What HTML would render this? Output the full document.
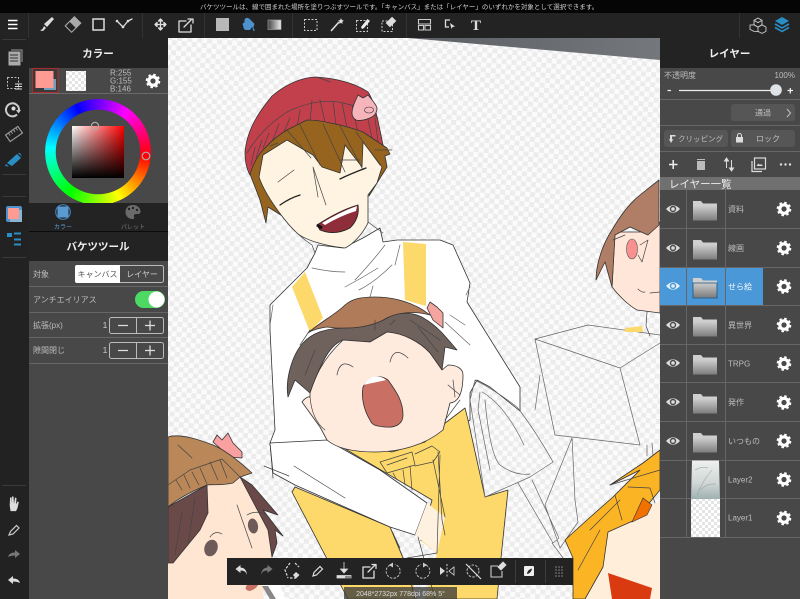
<!DOCTYPE html>
<html lang="ja"><head><meta charset="utf-8"><title>MediBang</title>
<style>
html,body{margin:0;padding:0;background:#222;width:800px;height:599px;overflow:hidden}
svg{display:block;filter:blur(.3px)}
text{font-family:"Liberation Sans","Noto Sans CJK JP",sans-serif}
.ln{fill:none;stroke:#444;stroke-width:.7;stroke-linejoin:round;stroke-linecap:round}
.gl{fill:none;stroke:#666;stroke-width:.7;stroke-linejoin:round;stroke-linecap:round}
.o{stroke:#333;stroke-width:.8;stroke-linejoin:round}
.i{fill:none;stroke:#ddd;stroke-width:1.3;stroke-linecap:round;stroke-linejoin:round}
.sep{stroke:#333;stroke-width:1}
.lab{font-size:8px;fill:#bdbdbd}
.div{stroke:#666;stroke-width:1}
</style></head><body>
<svg width="800" height="599" viewBox="0 0 800 599" xmlns="http://www.w3.org/2000/svg">
<defs>
<pattern id="ck" width="10" height="10" patternUnits="userSpaceOnUse" patternTransform="rotate(5)">
<rect width="10" height="10" fill="#fbfbfb"/><rect width="5" height="5" fill="#ececec"/><rect x="5" y="5" width="5" height="5" fill="#ececec"/></pattern>
<pattern id="ck2" width="6" height="6" patternUnits="userSpaceOnUse">
<rect width="6" height="6" fill="#fff"/><rect width="3" height="3" fill="#e4e4e4"/><rect x="3" y="3" width="3" height="3" fill="#e4e4e4"/></pattern>
<linearGradient id="gr" x1="0" x2="1" y1="0" y2="0"><stop offset="0" stop-color="#444"/><stop offset="1" stop-color="#eee"/></linearGradient>
<linearGradient id="fo" x1="0" x2="0" y1="0" y2="1"><stop offset="0" stop-color="#cfcfcf"/><stop offset="1" stop-color="#7d7d7d"/></linearGradient>
<linearGradient id="wed" x1="0" x2="1" y1="0" y2="0"><stop offset="0" stop-color="#5c5f64"/><stop offset="1" stop-color="#74777c"/></linearGradient>
<linearGradient id="sqw" x1="0" x2="1" y1="0" y2="0"><stop offset="0" stop-color="#fff"/><stop offset="1" stop-color="#f00"/></linearGradient>
<linearGradient id="sqb" x1="0" x2="0" y1="0" y2="1"><stop offset="0" stop-color="#000" stop-opacity="0"/><stop offset="1" stop-color="#000"/></linearGradient>
<linearGradient id="l2" x1="0" x2="0" y1="0" y2="1"><stop offset="0" stop-color="#eef0ef"/><stop offset=".6" stop-color="#cfd6d4"/><stop offset="1" stop-color="#9fb0b0"/></linearGradient>
<g id="gear"><circle r="4.2" fill="none" stroke="#fff" stroke-width="3.2"/><circle r="6.2" fill="none" stroke="#fff" stroke-width="2.2" stroke-dasharray="2.45 2.42"/></g>
<g id="eye"><path d="M-7 0Q0-7.5 7 0Q0 7.5-7 0Z" fill="#ddd"/><circle r="3.2" fill="#484848"/><circle r="1.8" fill="#ddd"/></g>
<g id="folder"><path d="M-12-8h8l2 2.5h14V11h-24Z" fill="#cfcfcf"/><path d="M-12-3.5H12V11.5H-12Z" fill="url(#fo)"/></g>
</defs>

<!-- canvas -->
<rect x="168" y="38" width="492" height="561" fill="url(#ck)"/>
<path d="M408 38L660 60V38Z" fill="url(#wed)"/>

<!-- main shirt -->
<path class="o" fill="#fff" d="M315 253L318 245 343 248 363 238 380 228 383 242 397 240 440 240 453 245 470 283 467 302 520 387 520 411 490 387 477 380 470 393 470 420 440 440 330 440 273 473 270 443 275 430 270 330 270 305 307 268Z" stroke-width=".6"/>
<path d="M292 287L305 272 323 318 310 332Z" fill="#fcd96a"/>
<path d="M403 242L426 244 426 306 405 300Z" fill="#fcd96a"/>
<path class="gl" d="M312 268Q330 272 345 272M345 287Q362 278 378 268M355 280Q372 262 385 245M359 290Q375 282 392 265M395 265L400 245M370 297L373 286M273 305L270 325M466 295L470 287M450 315L465 325M445 322L470 345"/>

<!-- big hat boy -->
<path class="o" fill="#c1404c" d="M245 152C247 130 258 113 272 96C285 85 300 78 315 77C335 78 355 83 368 92C374 100 378 120 383 145L387 150L363 135C345 127 325 122 307 121C290 128 270 142 258 158L250 175C246 168 245 160 245 152Z"/>
<path class="ln" d="M247 153Q262 128 287 112Q320 96 347 104Q365 108 378 118M251 165L255 147M256 158L262 140M263 148L269 133M272 142L279 124M284 132L290 118M297 127L300 110M310 122L312 100M325 122L320 100M336 125L333 101M347 128L342 103M358 133L352 105M372 138L367 115M378 142L375 118M317 77L330 82"/>
<path class="o" fill="#f6b4bb" d="M352 113C352 106 356 100 358 95L363 98 368 95C372 100 376 104 377 108C377 113 374 116 372 117C366 120 360 121 356 120C353 118 352 116 352 113Z"/>
<ellipse cx="369" cy="110" rx="4.5" ry="3" fill="#f6b4bb" stroke="#333" stroke-width=".6"/>
<path class="o" fill="#96641e" d="M250 174C254 162 258 155 263 150C272 140 280 134 287 130L307 120C315 120 322 121 330 123C342 125 352 128 363 132L387 148 390 154 385 156 387 167 377 183 369 196 372 165 340 180 290 215 292 222 268 207 266 223 260 200Z"/>
<path class="o" fill="#fff4e2" d="M259 177L263 155 287 140 313 155 322 167 340 173 345 145 362 167 363 142 382 167 377 183 368 195L368 223C362 235 352 245 345 248C325 246 305 240 297 233C285 222 265 195 259 177Z"/>
<path class="ln" d="M287 130L311 158M300 125L320 165M323 124L345 172M340 126L363 170M356 132L380 165M375 150L392 150M270 146L278 143M313 167L318 197M313 167L326 205M278 182L294 170M340 160L360 160"/>
<path d="M280 205Q290 198 300 195M340 179Q350 174 366 168" fill="none" stroke="#222" stroke-width="1.3" stroke-linecap="round"/>
<path d="M317 225Q340 210 358 205Q360 218 350 228Q335 236 320 230Z" fill="#8d2e3a" stroke="#222" stroke-width=".8"/>
<path d="M322 223Q340 212 357 206L356 211Q340 216 325 225Z" fill="#fff"/>
<path d="M317 225L322 228" stroke="#111" stroke-width="3"/>
<path class="ln" d="M297 233L305 240 312 245 315 253M368 222L383 233"/>

<!-- kid body -->
<path class="o" fill="#fcd96a" d="M440 427L465 408 468 420 485 497 508 490 501 558 497 599 405 599 432 500 330 440 392 452 425 442Z"/>
<path fill="#fcd96a" class="o" d="M292 492L295 487 390 527 408 570 415 599 348 599Z"/>
<path class="o" fill="#fff" stroke-width=".6" d="M270 443L327 440 380 470 427 503 415 535 390 527 295 485 273 473Z"/>
<path fill="#fff1e0" d="M427 503L445 517 437 553 415 535Z"/>
<path d="M393 533L413 535 437 553 425 599 417 599 407 558Z" fill="url(#ck)"/>
<path class="ln" d="M380 462L412 452 415 465 387 473ZM415 454L432 446 440 452 433 462 415 466M387 465L407 458M393 473L397 480M403 470L405 485M410 466L412 490M438 452L442 520 445 535M440 455L437 553M433 460L445 517M393 533L408 570M264 466L289 476M294 466L345 498M270 443L273 478M390 527L400 548M407 558L437 553M435 599L418 537"/>

<!-- kid head -->
<path class="o" fill="#b07b58" d="M308 333C320 322 335 315 345 305C352 299 360 297 375 297C395 297 415 303 430 315C415 311 400 312 387 318L373 327C360 327 345 330 327 327C320 328 312 330 308 333Z"/>
<path class="o" fill="#f5a5a0" d="M427 308L430 302 437 307 443 313 443 328 433 320Z"/>
<path class="o" fill="#6f625c" d="M288 397C285 380 292 355 303 343C312 333 325 328 347 328C360 328 375 325 387 318C400 311 415 312 425 319C440 328 448 340 457 350L445 347 442 370 430 353C420 342 403 333 387 332L370 342 343 340C330 345 322 360 310 393L295 380Z"/>
<path class="o" fill="#ffeade" d="M310 393C316 375 322 360 343 340L370 342 387 332C403 333 420 342 430 353L442 370 448 365C456 365 463 368 463 375C463 390 460 402 450 403L443 430C425 445 400 452 375 452C350 452 335 447 327 440L320 427 302 402C304 399 308 396 310 397Z"/>
<path class="ln" d="M337 375Q340 358 353 367M390 362Q394 345 408 358M310 397Q312 420 325 430M448 385L460 395M453 380L455 397M460 400L445 420"/>
<path d="M363 387C368 378 378 373 388 380C395 390 403 400 403 415C403 424 396 428 385 427C375 426 372 425 370 420C364 410 361 398 363 387Z" fill="#c96f63" stroke="#333" stroke-width=".8"/>
<path d="M364 385C368 377 378 373 386 380C378 382 370 383 364 385Z" fill="#fff"/>
<path class="ln" d="M300 345L310 330M315 350L305 375M410 320L440 340M418 327L438 352M390 325L395 320M375 320L375 330"/>

<!-- shovel / box / legs -->
<path class="gl" d="M475 380L470 400 485 497 530 477 553 462Q535 430 517 407Q495 390 475 380ZM480 392L478 410 490 470M482 392Q505 405 524 445M485 400Q490 455 500 465Q515 476 530 474M518 483L553 543 559 538 532 480M535 410L540 375M535 339L588 325 660 335M535 339L620 368 660 343M620 368L640 445M535 339L555 435 640 445M572 438L575 500 578 522M572 438L545 505 560 548M560 548L578 522M552 543L572 570M647 445L647 456M652 443L653 456"/>

<!-- right girl -->
<path class="o" fill="#ffe6d8" d="M615 232L612 287C618 295 628 305 637 310L660 313 660 222 648 232Z"/>
<path class="o" fill="#b07e66" d="M596 280C596 262 604 242 612 230C620 216 630 203 640 195L659 180 659 225 648 235 630 227 615 235 612 287 605 262Z"/>
<ellipse cx="632" cy="249" rx="5.500" ry="10" fill="#f7908f" stroke="#555" stroke-width=".6"/>
<path class="ln" d="M613 240L625 235M640 245L648 240 642 262 638 255M638 289Q642 293 645 292M650 293L660 292M647 312L646 326 650 336"/>
<path d="M625 328L642 326 643 332 625 332Z" fill="#fcd96a"/>

<!-- blond -->
<path fill="#ffeeda" d="M608 532L635 520 660 500 660 599 585 599 603 567Z"/>
<path class="o" fill="#fbb424" d="M610 485L643 463 660 450 660 490 635 520 608 532 603 567 585 599 573 599 573 558 565 540 587 520 613 497 640 470Z"/>
<path d="M632 522L643 498 652 505 647 515Z" fill="#f07000" stroke="#333" stroke-width=".6"/>
<path d="M608 573L652 588 650 599 612 599Z" fill="#d93a10"/>
<path class="ln" d="M628 487L650 488 655 503M615 495L622 520M590 530L620 500M578 570L600 530M610 485L660 470"/>

<!-- left-bottom kid -->
<path fill="#ffe6d2" d="M207 485L233 483 240 477 263 510 275 530 272 557 262 599 168 599 168 563 173 563 200 530 208 513Z"/>
<path class="o" fill="#6a4a48" d="M168 507L207 485 208 513 200 530 173 563 168 563Z"/>
<path class="o" fill="#6a4a48" d="M240 477L252 485 278 515 263 510 283 536 275 530 277 543 272 557 268 530Z"/>
<path class="o" fill="#f9a0a0" d="M213 442L217 435 222 440 228 433 233 443 242 452 242 458 230 457Z"/>
<path class="o" fill="#b98758" d="M168 437C180 433 200 440 213 445C225 450 240 462 252 473L240 477 233 483C220 486 212 484 207 485C195 490 180 497 168 507Z"/>
<path class="ln" d="M168 485L190 470 222 459 240 477M176 480L182 490M184 475L190 488M192 472L199 485M200 468L207 484M210 462L218 480M220 460L227 478M178 445L192 458M182 512L175 555M195 498L188 545M237 505L252 548"/>
<path d="M247 515Q255 510 265 514M210 537Q215 530 222 534" class="ln"/>
<ellipse cx="253" cy="526" rx="5" ry="7.500" fill="#6e5a58" transform="rotate(-10 253 526)"/><ellipse cx="211" cy="548" rx="6.500" ry="8.500" fill="#6e5a58" transform="rotate(20 211 548)"/>
<path d="M247 585Q243 590 250 591 256 589 258 585Z" fill="#c96f63"/>
<path d="M262 585L280 585 285 599 275 599Z" fill="#fff"/>
<path d="M262 586L268 586 276 599 270 599Z" fill="#888"/>

<!-- TOP BAR -->
<rect x="0" y="0" width="800" height="13" fill="#050505"/>
<text x="399" y="9" text-anchor="middle" font-size="6.5" fill="#cfcfcf">バケツツールは、線で囲まれた場所を塗りつぶすツールです。「キャンバス」または「レイヤー」のいずれかを対象として選択できます。</text>
<rect x="0" y="13" width="800" height="25" fill="#232323"/>
<path class="sep" d="M28.5 13V38M142.5 13V38M204.5 13V38M292.5 13V38M406.5 13V38M739.5 13V38"/>
<path d="M8 20.5H17.5M8 24.5H17.5M8 28.5H17.5" stroke="#fff" stroke-width="1.5"/>
<path d="M54 19L52 17 44 24 47 27ZM44 26L46 28 43 31 40 30.5 42.5 29Z" fill="#ddd"/>
<g transform="translate(73 24.5) rotate(45)"><rect x="-4.5" y="-6.5" width="9" height="13" fill="none" stroke="#aaa" stroke-width="1.1"/><rect x="-4.5" y="-6.5" width="9" height="7" fill="#aaa"/></g>
<rect x="93" y="19" width="11" height="11" fill="none" stroke="#ddd" stroke-width="1.5"/>
<path d="M117 21L123 27 128 21 132 19" class="i"/><circle cx="117" cy="21" r="1.3" fill="#ddd"/><circle cx="123" cy="27" r="1.3" fill="#ddd"/><circle cx="128" cy="21" r="1.3" fill="#ddd"/>
<path d="M155 24.5H166M160.5 19V30M155 24.5l2-2v4ZM166 24.5l-2-2v4ZM160.5 19l-2 2h4ZM160.5 30l-2-2h4Z" class="i" stroke-width="1" fill="#ddd"/>
<path d="M186 21H179V32H191V25M184 27L191 20M188 19H193V23" class="i" stroke-width="1.2"/>
<rect x="216" y="18" width="13" height="13" fill="#b8b8b8"/>
<path d="M243 24L249 19 254 24 253 27H244ZM245 23V19.5Q247 17 249 19.5" fill="#4d92cc" stroke="#4d92cc" stroke-width=".9"/><path d="M253 27Q255 30 254.5 31 252 31 253 27ZM243 27H252L250 30H245Z" fill="#4d92cc"/>
<rect x="268" y="20" width="13" height="9.5" fill="url(#gr)" stroke="#aaa" stroke-width=".6"/>
<rect x="304.5" y="19.5" width="12.5" height="11" fill="none" stroke="#ccc" stroke-width="1" stroke-dasharray="2 1.5"/>
<path d="M331 31L339 22" stroke="#ddd" stroke-width="1.6"/><path d="M341 18l.8 2 2 .5-1.5 1.4.3 2-1.6-1-1.8 1 .4-2-1.5-1.4 2-.5Z" fill="#ddd"/>
<rect x="356.5" y="20.5" width="11" height="11" fill="none" stroke="#ccc" stroke-width="1" stroke-dasharray="2 1.5"/>
<path d="M361 27l1 2 2-1 6-7-2.500-2Z" fill="#eee"/>
<rect x="382" y="21" width="10.500" height="10.500" fill="none" stroke="#ccc" stroke-width="1" stroke-dasharray="2 1.5"/>
<g transform="translate(391 22) rotate(45)"><rect x="-3" y="-4.500" width="6" height="9" fill="#ddd"/></g>
<path d="M418.500 19.500H430.500V24H418.500ZM418.500 25.500H423.500V30H418.500ZM425 25.500H430.500V30H425Z" fill="none" stroke="#ccc" stroke-width="1.100"/>
<path d="M450 20H445.500V27H449" fill="none" stroke="#ddd" stroke-width="1.300"/><path d="M450 23l5 3.500-2.500.5-1 2Z" fill="#ddd"/>
<text x="476" y="30" text-anchor="middle" font-size="15" font-weight="700" fill="#ddd" style="font-family:'Liberation Serif',serif">T</text>
<g fill="none" stroke="#ccc" stroke-width=".9"><path d="M758 18l4 2.300v4.500l-4 2.300-4-2.300v-4.500Z"/><path d="M754 24.800l4 2.300v4.500l-4-.2-4-2v-4.300ZM762 24.800l4 2.300v4.300l-4 2-4-2v-4.300ZM754 20.300l4 2.300 4-2.300"/></g>
<path d="M782 17l7 4-7 4-7-4Z" fill="#2a8ec6"/><path d="M775 24l7 4 7-4M775 27.500l7 4 7-4" fill="none" stroke="#2a8ec6" stroke-width="1.600"/>

<!-- LEFT STRIP -->
<rect x="0" y="38" width="29" height="561" fill="#222"/>
<path d="M2 39.500H26M2 174.500H26M2 196.500H26M2 257.500H26M2 485.500H26" stroke="#3a3a3a"/>
<path d="M9 52H20V65H9Z" fill="#aaa" stroke="#aaa"/><path d="M11 50H22V62" fill="none" stroke="#999"/><path d="M10 55H18M10 58H18M10 61H18" stroke="#333"/>
<rect x="7.500" y="77.500" width="11" height="11" fill="none" stroke="#bbb" stroke-dasharray="2 1.500"/><path d="M15 84H22M15 86.500H22M15 89H22" stroke="#ddd"/>
<path d="M19 110A6.500 6.500 0 1 0 17 114.500" fill="none" stroke="#ccc" stroke-width="2"/><circle cx="13.500" cy="108.500" r="2" fill="#ddd"/><path d="M21 110h-5l2.500 3.500Z" fill="#ccc"/>
<g transform="translate(14 134) rotate(-35)"><rect x="-7.500" y="-4" width="15" height="8" fill="none" stroke="#999" stroke-width="1.200"/><path d="M-4-4v3M-1-4v3M2-4v3M5-4v3" stroke="#999"/></g>
<path d="M7 163L17 154 21 158 12 166ZM18 153L20 155 22 157 20 153Z" fill="#2a8ec6"/><path d="M6 164l-1 2 4 .5Z" fill="#2a8ec6"/>
<rect x="6" y="206" width="16" height="16" rx="2" fill="#4d92cc"/><rect x="10" y="210" width="12" height="12" fill="#8fb4d0"/><rect x="8" y="208" width="11" height="11" fill="#ff9b92"/>
<path d="M7 233h5v4H7Z" fill="#2a8ec6"/><path d="M14 233.500H21M14 239.500H21M14 244.500H21" stroke="#2a8ec6" stroke-width="2"/>
<path d="M9 500l1 5V497.500h1.500V504l.5-7.500h1.500L14 504l1-6.500 1.500.5-.5 6.500 1.500-3 1.300.6-1.300 6-1.500 3h-5.500Z" fill="#ddd"/>
<path d="M9 535l1.500-3.500 6-6 2.500 2.500-6 6Z" fill="none" stroke="#ccc" stroke-width="1.200"/>
<path d="M8 557q1-4.500 7-4.500v-2.500l5 4-5 4v-2.500q-4 0-7 1.500Z" fill="#777"/>
<path d="M20 583q-1-4.500-7-4.500v-2.500l-5 4 5 4v-2.500q4 0 7 1.500Z" fill="#ddd"/>

<!-- LEFT PANEL -->
<rect x="29" y="38" width="139" height="561" fill="#484848"/>
<rect x="29" y="38" width="139" height="30" fill="#232323"/>
<text x="98" y="57" text-anchor="middle" font-size="10.500" fill="#eee" font-weight="700">カラー</text>
<rect x="32.500" y="68.500" width="25.500" height="24" fill="#3a3a3a" stroke="#a82c30" stroke-width="1.100"/>
<rect x="44" y="79" width="12" height="11" fill="#6fa0bb"/><rect x="35.500" y="71" width="18" height="17" fill="#ff9b92"/>
<rect x="66" y="71" width="20" height="20" fill="url(#ck2)"/>
<text x="110" y="75.500" class="lab">R:255</text><text x="110" y="83.500" class="lab">G:155</text><text x="110" y="91.500" class="lab">B:146</text>
<use href="#gear" x="153" y="81"/>
<path d="M29 93.500H168" stroke="#6a6a6a"/>
<foreignObject x="45" y="99" width="106" height="106"><div xmlns="http://www.w3.org/1999/xhtml" style="width:106px;height:106px;border-radius:50%;background:conic-gradient(from 95deg,#f00,#ff0 60deg,#0f0 120deg,#0ff 180deg,#00f 240deg,#f0f 300deg,#f00);-webkit-mask:radial-gradient(circle,transparent 42px,#000 42.500px);mask:radial-gradient(circle,transparent 42px,#000 42.500px)"></div></foreignObject>
<rect x="72" y="126" width="52" height="52" fill="url(#sqw)"/><rect x="72" y="126" width="52" height="52" fill="url(#sqb)"/>
<circle cx="95" cy="126" r="3.600" fill="none" stroke="#aaa" stroke-width="1.200"/>
<circle cx="146" cy="156" r="3.800" fill="none" stroke="#aaa" stroke-width="1.200"/>
<rect x="29" y="203" width="139" height="28" fill="#232323"/>
<circle cx="63" cy="212" r="7.300" fill="none" stroke="#3f7fb4" stroke-width="1.200"/><rect x="57.500" y="206.500" width="11" height="11" rx="1.500" fill="#5b9ad0"/>
<text x="63" y="229" text-anchor="middle" font-size="6" fill="#5b9ad0">カラー</text>
<path d="M133 205c-5 0-7.500 3-7.500 7 0 3.500 2.500 7 7 7 2 0 2-1.500 1.500-2.500-.5-1.500.5-2.500 2-2.500h2c1.500 0 2.500-1 2.500-2.500 0-3.500-3-6.500-7.500-6.500Z" fill="#6a6a6a"/><circle cx="129" cy="209" r="1.200" fill="#232323"/><circle cx="133" cy="208" r="1.200" fill="#232323"/><circle cx="137" cy="210" r="1.200" fill="#232323"/>
<text x="133" y="229" text-anchor="middle" font-size="6" fill="#777">パレット</text>
<rect x="29" y="231" width="139" height="30" fill="#232323"/><path d="M29 231.500H168" stroke="#0c0c0c"/>
<text x="98" y="250" text-anchor="middle" font-size="10.500" fill="#eee" font-weight="700">バケツツール</text>
<path class="div" d="M29 286.500H168M29 312.500H168M29 337.500H168M29 363.500H168"/>
<text x="33" y="277" class="lab">対象</text>
<rect x="75.500" y="265.500" width="88" height="17" rx="2" fill="none" stroke="#bbb"/>
<path d="M77 265h43v18H77a2 2 0 0 1-2-2V267a2 2 0 0 1 2-2Z" fill="#fff"/>
<text x="97.500" y="277" text-anchor="middle" font-size="8" fill="#555">キャンバス</text>
<text x="142" y="277" text-anchor="middle" font-size="8" fill="#ccc">レイヤー</text>
<text x="33" y="302.500" class="lab">アンチエイリアス</text>
<rect x="135" y="291" width="30" height="17" rx="8.500" fill="#4cd964"/><circle cx="156.500" cy="299.500" r="8" fill="#fff"/>
<text x="33" y="328" class="lab">拡張(px)</text><text x="105" y="328" text-anchor="middle" font-size="8.500" fill="#ccc">1</text>
<g id="stp"><rect x="109.500" y="317.500" width="54" height="16" rx="2" fill="none" stroke="#bbb"/><path d="M136.500 317.500V333.500" stroke="#bbb"/><path d="M118 325.500H128M145 325.500H155M150 320.500V330.500" stroke="#ddd" stroke-width="1.300"/></g>
<text x="33" y="353" class="lab">隙間閉じ</text><text x="105" y="353" text-anchor="middle" font-size="8.500" fill="#ccc">1</text>
<use href="#stp" y="25"/>

<!-- RIGHT PANEL -->
<rect x="660" y="38" width="140" height="561" fill="#484848"/>
<rect x="660" y="38" width="140" height="30" fill="#232323"/>
<text x="729.500" y="57" text-anchor="middle" font-size="10.500" fill="#eee" font-weight="700">レイヤー</text>
<text x="664" y="78" class="lab">不透明度</text><text x="795" y="78" class="lab" text-anchor="end">100%</text>
<path d="M667.500 90.500H671" stroke="#eee" stroke-width="1.300"/>
<path d="M679 90.500H776" stroke="#eee" stroke-width="1.300"/><circle cx="776" cy="90" r="5.800" fill="#dfe3e6"/>
<path d="M787.500 90.500H793M790.300 88V93.500" stroke="#eee" stroke-width="1.300"/>
<path class="div" d="M660 99.500H800M660 125.500H800M660 151.500H800"/>
<rect x="731" y="104" width="64" height="17" rx="3" fill="#565656"/>
<text x="763" y="115.500" text-anchor="middle" class="lab">通過</text>
<path d="M787 109l3.500 4-3.500 4" fill="none" stroke="#bbb" stroke-width="1.100"/>
<rect x="664" y="130" width="64" height="17" rx="3" fill="#565656"/><rect x="731" y="130" width="64" height="17" rx="3" fill="#565656"/>
<path d="M670 135h5.500v1.500H672v3l1.500-.5-2.500 4-2-4h1Z" fill="#ddd"/>
<text x="678" y="141.500" class="lab" style="font-size:7.500px">クリッピング</text>
<rect x="736" y="137" width="7" height="5.500" fill="#ddd"/><path d="M737.500 137v-1.500a2 2 0 0 1 4 0V137" fill="none" stroke="#ddd"/>
<text x="768" y="141.500" text-anchor="middle" class="lab">ロック</text>
<path d="M669 164.500H677.500M673.200 160V169" stroke="#eee" stroke-width="1.500"/>
<path d="M697 159h8v1h-8ZM697 161h8v9h-8Z" fill="#bbb"/>
<path d="M726.500 168V159M726.500 158l-2 3h4ZM731.500 160V170M731.500 171l-2-3h4Z" stroke="#ddd" stroke-width="1" fill="#ddd"/>
<rect x="754.500" y="158" width="11" height="11" fill="none" stroke="#ddd" stroke-width="1.200"/><path d="M752 161V171.500H762" fill="none" stroke="#ddd" stroke-width="1.200"/><path d="M756.500 166l2-2.500 1.500 1.500 1-1 2 2Z" fill="#ddd"/>
<circle cx="781" cy="164.500" r="1.200" fill="#ddd"/><circle cx="785.500" cy="164.500" r="1.200" fill="#ddd"/><circle cx="790" cy="164.500" r="1.200" fill="#ddd"/>
<rect x="660" y="177" width="140" height="13" fill="#707070"/>
<text x="669" y="187.500" font-size="10.500" fill="#eee">レイヤー一覧</text>

<rect x="660" y="267" width="103" height="38" fill="#4a98d8"/>
<path d="M686.500 190V537M725.500 190V537" stroke="#666"/>
<path class="div" d="M660 228.500H800M660 267.500H800M660 305.500H800M660 344.500H800M660 382.500H800M660 421.500H800M660 460.500H800M660 498.500H800M660 537.500H800"/>
<use href="#eye" x="673" y="209"/><use href="#eye" x="673" y="248"/>
<g transform="translate(673 286)"><path d="M-7 0Q0-7.500 7 0Q0 7.500-7 0Z" fill="#e4eef6"/><circle r="3.200" fill="#4a98d8"/><circle r="1.800" fill="#e4eef6"/></g>
<use href="#eye" x="673" y="325"/><use href="#eye" x="673" y="402"/><use href="#eye" x="673" y="363"/><use href="#eye" x="673" y="441"/>
<use href="#folder" x="705" y="209"/><use href="#folder" x="705" y="248"/><use href="#folder" x="705" y="286"/><use href="#folder" x="705" y="325"/><use href="#folder" x="705" y="363"/><use href="#folder" x="705" y="402"/><use href="#folder" x="705" y="441"/>
<path d="M693 298V283h24v15Z" fill="none" stroke="#20527a" stroke-width=".8"/>
<g class="lab"><text x="728" y="212" class="lab">資料</text><text x="728" y="251" class="lab">線画</text><text x="728" y="289.500" class="lab" style="fill:#f2f7fb">せら絵</text><text x="728" y="328" class="lab">異世界</text><text x="728" y="366.500" class="lab">TRPG</text><text x="728" y="405" class="lab">発作</text><text x="728" y="444" class="lab">いつもの</text><text x="728" y="482.500" class="lab">Layer2</text><text x="728" y="520.500" class="lab">Layer1</text></g>
<use href="#gear" x="784" y="209"/><use href="#gear" x="784" y="248"/><use href="#gear" x="784" y="286.500"/><use href="#gear" x="784" y="325"/><use href="#gear" x="784" y="363.500"/><use href="#gear" x="784" y="402.500"/><use href="#gear" x="784" y="441"/><use href="#gear" x="784" y="479.500"/><use href="#gear" x="784" y="518"/>
<path d="M692 460.500H719L720 499H691Z" fill="url(#l2)"/>
<path d="M697 495Q703 480 712 470M700 490Q708 483 716 484M695 470Q702 466 708 468" fill="none" stroke="#8b9a9a" stroke-width=".5"/>
<rect x="691" y="499" width="29" height="38" fill="url(#ck2)"/>

<!-- BOTTOM TOOLBAR -->
<rect x="227" y="558" width="346" height="27" fill="#232323"/>
<path d="M247 575q-1-4.500-6.500-4.500V573l-5-4 5-4v2.500q6 .5 6.500 7.500Z" fill="#ddd"/>
<path d="M261 575q1-4.500 6.500-4.500V573l5-4-5-4v2.500q-6 .5-6.500 7.500Z" fill="#777"/>
<path d="M290 563L285 570 288 578M295 563L299 567M290 578H296" fill="none" stroke="#ddd" stroke-width="1.200" stroke-dasharray="2.500 1.500"/><path d="M296 572l3.500 3-3.500 3.500-3-3.500Z" fill="#ddd"/>
<path d="M313 576l1-3.500 6-6 2.500 2.500-6 6Z" fill="none" stroke="#ddd" stroke-width="1.200"/>
<path d="M344 562V570M344 573l-3.500-4h7ZM337 575.500H351V578H337Z" fill="#ddd" stroke="#ddd" stroke-width=".8"/><rect x="345" y="576" width="6" height="2.500" fill="#888"/>
<path d="M370 567H363V578H374V571M368 572L375 565M372 564.500H376V568.500" class="i" stroke-width="1.100"/>
<path d="M390 565A7 7 0 1 0 395 564.500" fill="none" stroke="#bbb" stroke-width="1" stroke-dasharray="2.500 1.300"/><path d="M389 565l4-2.500v5Z" fill="#ccc"/>
<path d="M426 565A7 7 0 1 1 421 564.500" fill="none" stroke="#bbb" stroke-width="1" stroke-dasharray="2.500 1.300"/><path d="M427 565l-4-2.500v5Z" fill="#ccc"/>
<path d="M440 567v8l5-4Z" fill="#ddd"/><path d="M454 567v8l-5-4Z" fill="none" stroke="#ddd" stroke-width=".8"/><path d="M447 564V578" stroke="#ccc" stroke-dasharray="2 1.500"/>
<circle cx="473" cy="571" r="6" fill="none" stroke="#bbb" stroke-width="1" stroke-dasharray="2.500 1.300"/><path d="M466 564L481 579" stroke="#ddd" stroke-width="1.200"/>
<path d="M498 566H491V577H502V571" fill="none" stroke="#ccc" stroke-width="1.100"/>
<g transform="translate(502 566) rotate(45)"><rect x="-2.500" y="-4" width="5" height="8" fill="#ddd"/></g>
<path d="M515.500 560V583M545.500 560V583" stroke="#3d3d3d"/>
<rect x="524" y="566" width="10" height="10" rx="1" fill="#eee"/><path d="M527 574q0-4 5-5.500-.5 4.500-5 5.500Z" fill="#232323"/>
<g fill="#888"><circle cx="556" cy="567" r=".8"/><circle cx="559" cy="567" r=".8"/><circle cx="562" cy="567" r=".8"/><circle cx="556" cy="570" r=".8"/><circle cx="559" cy="570" r=".8"/><circle cx="562" cy="570" r=".8"/><circle cx="556" cy="573" r=".8"/><circle cx="559" cy="573" r=".8"/><circle cx="562" cy="573" r=".8"/><circle cx="556" cy="576" r=".8"/><circle cx="559" cy="576" r=".8"/><circle cx="562" cy="576" r=".8"/></g>
<rect x="344" y="587" width="113" height="12" fill="#3a3a3a" opacity=".78"/>
<text x="400.500" y="596" text-anchor="middle" font-size="7" fill="#ddd">2048*2732px 778dpi 68% 5°</text>
</svg>
</body></html>
